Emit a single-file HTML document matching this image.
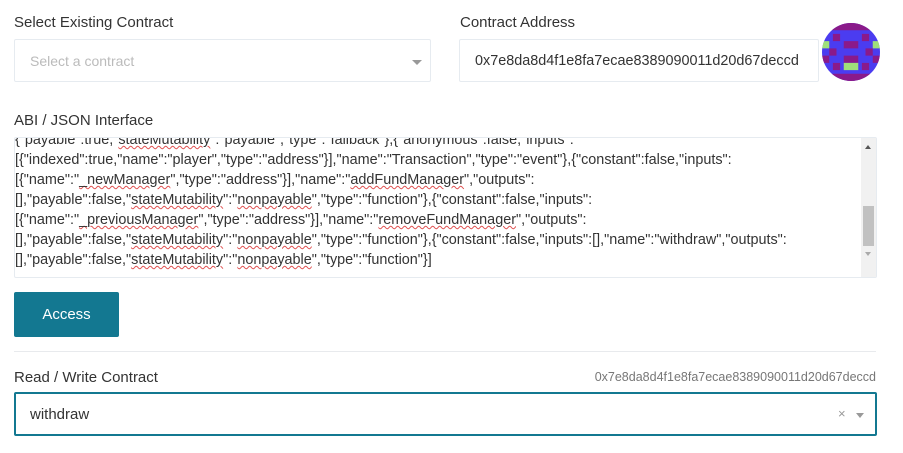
<!DOCTYPE html>
<html><head><style>
body{margin:0;width:903px;height:453px;background:#fff;font-family:"Liberation Sans",sans-serif;color:#333;position:relative;overflow:hidden}
.a{position:absolute}
.lbl{font-size:15px;color:#333}
.box{border:1px solid #e6ebf0;border-radius:2px;background:#fff;box-sizing:border-box}
.ta div{white-space:pre;font-size:14.4px;height:20px;line-height:20px;color:#333;letter-spacing:0}
u{text-decoration:underline wavy #e05050;text-decoration-thickness:1px}
</style></head><body>
<div class="a lbl" style="left:14px;top:14px">Select Existing Contract</div>
<div class="a box" style="left:14px;top:39px;width:417px;height:43px"></div>
<div class="a" style="left:30px;top:53px;font-size:14px;color:#bbb">Select a contract</div>
<div class="a" style="left:412px;top:60px;width:0;height:0;border-left:5px solid transparent;border-right:5px solid transparent;border-top:5px solid #999"></div>

<div class="a lbl" style="left:460px;top:14px">Contract Address</div>
<div class="a box" style="left:459px;top:39px;width:360px;height:43px"></div>
<div class="a" style="left:475px;top:53px;font-size:14.4px;color:#333">0x7e8da8d4f1e8fa7ecae8389090011d20d67deccd</div>
<svg class="a" style="left:822px;top:23px" width="58" height="58" viewBox="0 0 8 8">
<defs><clipPath id="c"><circle cx="4" cy="4" r="4"/></clipPath></defs>
<g clip-path="url(#c)">
<rect width="8" height="8" fill="#4b3cf0"/>
<rect x="0" y="0" width="8" height="1" fill="#8a1a8a"/>
<rect x="1.5" y="1.5" width="1" height="1" fill="#8a1a8a"/><rect x="5.5" y="1.5" width="1" height="1" fill="#8a1a8a"/>
<rect x="0" y="2.5" width="1" height="1" fill="#9fe07a"/><rect x="7" y="2.5" width="1" height="1" fill="#9fe07a"/>
<rect x="3" y="2.5" width="2" height="1" fill="#8a1a8a"/>
<rect x="1" y="3.5" width="1" height="1" fill="#8a1a8a"/><rect x="6" y="3.5" width="1" height="1" fill="#8a1a8a"/>
<rect x="0" y="4.5" width="1" height="1" fill="#8a1a8a"/><rect x="7" y="4.5" width="1" height="1" fill="#8a1a8a"/>
<rect x="3" y="4.5" width="2" height="1" fill="#8a1a8a"/>
<rect x="1.5" y="5.5" width="1" height="1" fill="#8a1a8a"/><rect x="5.5" y="5.5" width="1" height="1" fill="#8a1a8a"/>
<rect x="3" y="5.5" width="2" height="1" fill="#9fe07a"/>
<rect x="0" y="7" width="8" height="1" fill="#8a1a8a"/>
</g></svg>

<div class="a lbl" style="left:14px;top:112px">ABI / JSON Interface</div>
<div class="a box ta" style="left:14px;top:137px;width:863px;height:141px;overflow:hidden;padding-left:0px">
<div style="margin-top:-8px">{"payable":true,"<u>stateMutability</u>":"payable","type":"fallback"},{"anonymous":false,"inputs":</div>
<div>[{"indexed":true,"name":"player","type":"address"}],"name":"Transaction","type":"event"},{"constant":false,"inputs":</div>
<div>[{"name":"<u>_newManager</u>","type":"address"}],"name":"<u>addFundManager</u>","outputs":</div>
<div>[],"payable":false,"<u>stateMutability</u>":"<u>nonpayable</u>","type":"function"},{"constant":false,"inputs":</div>
<div>[{"name":"<u>_previousManager</u>","type":"address"}],"name":"<u>removeFundManager</u>","outputs":</div>
<div>[],"payable":false,"<u>stateMutability</u>":"<u>nonpayable</u>","type":"function"},{"constant":false,"inputs":[],"name":"withdraw","outputs":</div>
<div>[],"payable":false,"<u>stateMutability</u>":"<u>nonpayable</u>","type":"function"}]</div>
</div>
<div class="a" style="left:861px;top:138px;width:15px;height:139px;background:#f1f1f1"></div>
<div class="a" style="left:863px;top:206px;width:11px;height:40px;background:#c1c1c1"></div>
<div class="a" style="left:865px;top:145px;width:0;height:0;border-left:3px solid transparent;border-right:3px solid transparent;border-bottom:4px solid #555"></div>
<div class="a" style="left:865px;top:252px;width:0;height:0;border-left:3px solid transparent;border-right:3px solid transparent;border-top:4px solid #aaa"></div>

<div class="a" style="left:14px;top:292px;width:105px;height:45px;background:#137891;border-radius:2px;color:#fff;font-size:15px;line-height:45px;text-align:center">Access</div>
<div class="a" style="left:14px;top:351px;width:862px;height:1px;background:#e8eaed"></div>

<div class="a lbl" style="left:14px;top:369px">Read / Write Contract</div>
<div class="a" style="right:27px;top:370px;font-size:12.5px;color:#777">0x7e8da8d4f1e8fa7ecae8389090011d20d67deccd</div>
<div class="a" style="left:14px;top:392px;width:863px;height:44px;border:2px solid #137891;box-sizing:border-box;border-radius:2px"></div>
<div class="a" style="left:30px;top:406px;font-size:15px;color:#333">withdraw</div>
<div class="a" style="left:838px;top:406px;font-size:13px;color:#999">×</div>
<div class="a" style="left:856px;top:413px;width:0;height:0;border-left:4px solid transparent;border-right:4px solid transparent;border-top:5px solid #999"></div>
</body></html>
